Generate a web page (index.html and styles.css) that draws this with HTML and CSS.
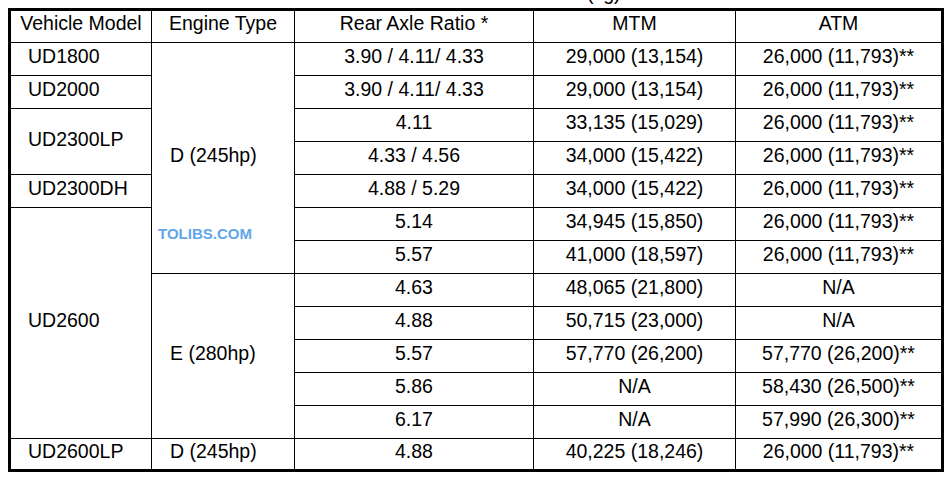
FILE: index.html
```html
<!DOCTYPE html>
<html>
<head>
<meta charset="utf-8">
<link rel="stylesheet" href="styles.css">
</head>
<body>
<div class="page">
  <div class="caption"><span>(kg)</span></div>
  <div class="grid">
    <div class="c hd">Vehicle Model</div>
    <div class="c hd">Engine Type</div>
    <div class="c hd">Rear Axle Ratio *</div>
    <div class="c hd">MTM</div>
    <div class="c hd">ATM</div>

    <div class="c lt r1">UD1800</div>
    <div class="c lt eng r1-7">D (245hp)</div>
    <div class="c r1">3.90 / 4.11/ 4.33</div>
    <div class="c r1">29,000 (13,154)</div>
    <div class="c r1">26,000 (11,793)**</div>

    <div class="c lt">UD2000</div>
    <div class="c">3.90 / 4.11/ 4.33</div>
    <div class="c">29,000 (13,154)</div>
    <div class="c">26,000 (11,793)**</div>

    <div class="c lt span2">UD2300LP</div>
    <div class="c">4.11</div>
    <div class="c">33,135 (15,029)</div>
    <div class="c">26,000 (11,793)**</div>

    <div class="c">4.33 / 4.56</div>
    <div class="c">34,000 (15,422)</div>
    <div class="c">26,000 (11,793)**</div>

    <div class="c lt">UD2300DH</div>
    <div class="c">4.88 / 5.29</div>
    <div class="c">34,000 (15,422)</div>
    <div class="c">26,000 (11,793)**</div>

    <div class="c lt span7">UD2600</div>
    <div class="c">5.14</div>
    <div class="c">34,945 (15,850)</div>
    <div class="c">26,000 (11,793)**</div>

    <div class="c">5.57</div>
    <div class="c">41,000 (18,597)</div>
    <div class="c">26,000 (11,793)**</div>

    <div class="c lt eng span5">E (280hp)</div>
    <div class="c">4.63</div>
    <div class="c">48,065 (21,800)</div>
    <div class="c">N/A</div>

    <div class="c">4.88</div>
    <div class="c">50,715 (23,000)</div>
    <div class="c">N/A</div>

    <div class="c">5.57</div>
    <div class="c">57,770 (26,200)</div>
    <div class="c">57,770 (26,200)**</div>

    <div class="c">5.86</div>
    <div class="c">N/A</div>
    <div class="c">58,430 (26,500)**</div>

    <div class="c">6.17</div>
    <div class="c">N/A</div>
    <div class="c">57,990 (26,300)**</div>

    <div class="c lt">UD2600LP</div>
    <div class="c lt eng">D (245hp)</div>
    <div class="c">4.88</div>
    <div class="c">40,225 (18,246)</div>
    <div class="c">26,000 (11,793)**</div>

    <div class="mark">TOLIBS.COM</div>
  </div>
</div>
</body>
</html>
```

FILE: styles.css
```css
html, body {
  margin: 0;
  padding: 0;
  background: #fff;
}

.page {
  padding: 0 8px;
  font-family: "Liberation Sans", Arial, sans-serif;
  color: #000;
}

.caption {
  height: 8px;
  box-sizing: border-box;
  padding-bottom: 5px;
  padding-left: 579px;
  overflow: hidden;
  display: flex;
  align-items: flex-end;
  font-size: 19.5px;
  line-height: 19px;
}

.grid {
  position: relative;
  width: 936px;
  box-sizing: border-box;
  display: grid;
  grid-template-columns: 140px 142px 238px 201px 205px;
  grid-template-rows: 31px repeat(12, 32px) 30px;
  gap: 1px;
  background: #000;
  border: 3px solid #000;
  font-size: 19.5px;
}

.c {
  background: #fff;
  display: flex;
  align-items: center;
  justify-content: center;
  padding-bottom: 5px;
  box-sizing: border-box;
  white-space: nowrap;
}

.hd {
  padding-bottom: 7px;
}

.lt {
  justify-content: flex-start;
  padding-left: 17px;
}

.eng {
  padding-left: 18px;
}

.r1-7 {
  grid-row: span 7;
}

.span2 {
  grid-row: span 2;
}

.span5 {
  grid-row: span 5;
}

.span7 {
  grid-row: span 7;
}

.mark {
  position: absolute;
  left: 147px;
  top: 214px;
  font-size: 15px;
  font-weight: bold;
  color: #62a6ea;
}
```
